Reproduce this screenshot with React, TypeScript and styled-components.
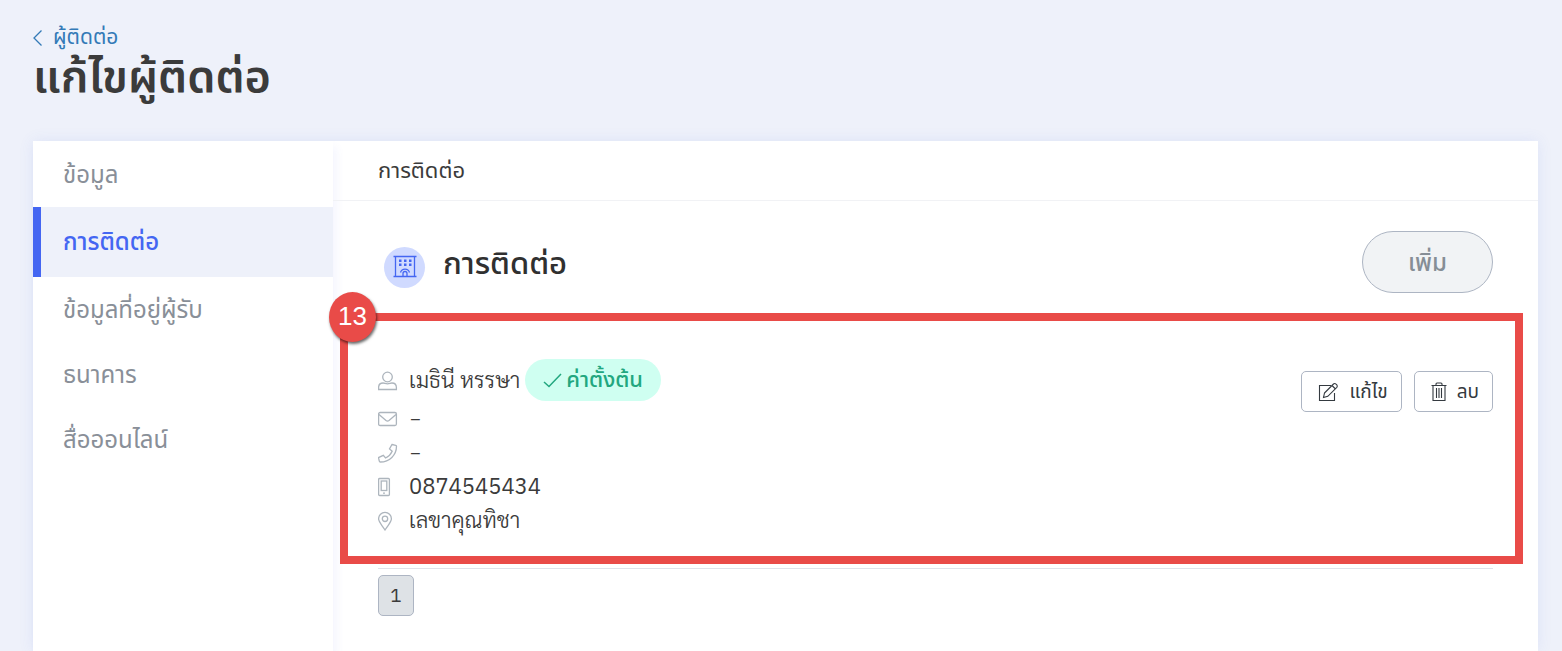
import React from "react";
import styled, { createGlobalStyle } from "styled-components";

const GlobalStyle = createGlobalStyle`
  *, *::before, *::after { box-sizing: border-box; }
  body {
    margin: 0;
    background: #eef1fa;
    color: #3b3b3b;
    font-family: "Noto Sans Thai", "Open Sans", sans-serif;
    font-size: 22px;
  }
  h1, h2, h3, ul, p { margin: 0; padding: 0; }
  ul { list-style: none; }
  button { font-family: inherit; cursor: pointer; }
`;

const Page = styled.div`
  display: flex;
  flex-direction: column;
  min-height: 100vh;
  padding: 21px 24px 0 33px;
`;

const BackLink = styled.a`
  display: flex;
  align-items: center;
  align-self: flex-start;
  gap: 10px;
  height: 32px;
  padding-top: 2px;
  line-height: 30px;
  font-size: 21px;
  color: #337ab7;
  text-decoration: none;
`;

const PageTitle = styled.h1`
  height: 88px;
  line-height: 50px;
  font-size: 45px;
  font-weight: 600;
`;

const Panel = styled.div`
  display: flex;
  flex: 1;
  background: #fff;
  box-shadow: 0 0 14px rgba(78, 105, 230, 0.1);
`;

const SideMenu = styled.nav`
  flex: 0 0 300px;
  padding-top: 1px;
  box-shadow: 4px 6px 8px rgba(78, 105, 230, 0.06);
`;

const MenuItem = styled.a<{ $active?: boolean }>`
  display: flex;
  align-items: center;
  height: ${(p) => (p.$active ? 70 : 65)}px;
  padding-top: 2px;
  padding-left: ${(p) => (p.$active ? 22 : 30)}px;
  border-left: ${(p) => (p.$active ? "8px solid #4466f2" : "0")};
  background: ${(p) => (p.$active ? "#eef1fa" : "transparent")};
  color: ${(p) => (p.$active ? "#4466f2" : "#898f98")};
  font-size: 24px;
  font-weight: ${(p) => (p.$active ? 500 : 400)};
  text-decoration: none;
`;

const Main = styled.main`
  flex: 1;
  min-width: 0;
`;

const MainHeader = styled.h2`
  height: 60px;
  padding: 2px 45px 0;
  border-bottom: 1px solid #f1f2f5;
  line-height: 58px;
  font-size: 22px;
  font-weight: 400;
`;

const Content = styled.div`
  padding: 30px 45px;
`;

const SectionHead = styled.div`
  display: flex;
  align-items: center;
  height: 62px;
  margin-bottom: 20px;
`;

const SectionIcon = styled.span`
  display: flex;
  align-items: center;
  justify-content: center;
  width: 41px;
  height: 41px;
  margin: 10px 18px 0 6px;
  border-radius: 50%;
  background: #d0daff;
  color: #4466f2;
`;

const SectionTitle = styled.h3`
  flex: 1;
  padding-top: 6px;
  line-height: 40px;
  color: #303030;
  font-size: 31px;
  font-weight: 500;
`;

const AddButton = styled.button`
  width: 131px;
  height: 62px;
  padding: 3px 0 0;
  border: 1px solid #adb5c3;
  border-radius: 31px;
  background: #f1f3f5;
  color: #868e96;
  font-size: 24px;
  font-weight: 500;
`;

const ContactCard = styled.article`
  position: relative;
  display: flex;
  justify-content: space-between;
  align-items: flex-start;
  padding: 46px 0 30px;
  border-bottom: 1px solid #e0e2ea;
`;

const Highlight = styled.div`
  position: absolute;
  top: 0;
  right: -30px;
  bottom: 4px;
  left: -38px;
  border: 8px solid #e94b48;
  pointer-events: none;
`;

const StepBadge = styled.span`
  position: absolute;
  top: -21px;
  left: -49px;
  width: 47px;
  height: 50px;
  border-radius: 50%;
  background: #e94b48;
  box-shadow: 1px 2px 3px rgba(0, 0, 0, 0.6);
  color: #fff;
  font: 26px/48px "Liberation Sans", sans-serif;
  text-align: center;
`;

const DetailRow = styled.li<{ $tall?: boolean }>`
  display: flex;
  align-items: center;
  height: ${(p) => (p.$tall ? 43 : 34)}px;
  font-family: "IBM Plex Sans Thai", "Open Sans", sans-serif;
  font-size: 22px;
`;

const DetailIcon = styled.span`
  display: flex;
  width: 31px;
  color: #adb5bd;
`;

const ThaiText = styled.span`
  padding-bottom: 4px;
  font-family: Sarabun, "Noto Sans Thai", sans-serif;
  font-weight: 300;
`;

const EmptyValue = styled.span`
  padding-bottom: 4px;
  font-family: Lato, sans-serif;
`;

const DefaultTag = styled.span`
  display: flex;
  align-items: center;
  align-self: flex-start;
  gap: 4px;
  height: 42px;
  margin-left: 5px;
  padding: 0 18px;
  border-radius: 21px;
  background: #cffff1;
  color: #22a77f;
  font-family: "Noto Sans Thai", sans-serif;
  font-size: 22px;
  font-weight: 500;
`;

const Actions = styled.div`
  display: flex;
  gap: 12px;
  margin-top: 12px;
`;

const SmallButton = styled.button`
  display: flex;
  align-items: center;
  gap: 10px;
  height: 41px;
  padding: 1px 13px 0 16px;
  border: 1px solid #adb5c3;
  border-radius: 5px;
  background: #fff;
  color: #343a40;
  font-size: 19px;
`;

const PageButton = styled.button`
  width: 36px;
  height: 41px;
  margin-top: 6px;
  padding: 2px 0 0;
  border: 1px solid #adb5c3;
  border-radius: 5px;
  background: #dee2e6;
  color: #3b3b3b;
  font-family: "IBM Plex Sans Thai", "Open Sans", sans-serif;
  font-size: 19px;
`;

type IconProps = { w?: number; h?: number; children: React.ReactNode };
const Icon = ({ w = 20, h = 20, children }: IconProps) => (
  <svg width={w} height={h} viewBox={`0 0 ${w} ${h}`} fill="none" stroke="currentColor" strokeWidth="1.3" aria-hidden="true">
    {children}
  </svg>
);

const ChevronIcon = () => (
  <Icon w={10} h={18}><path d="M8.500 1.500 1 9l7.500 7.500" /></Icon>
);
const BuildingIcon = () => (
  <Icon w={24} h={24}>
    <path d="M0.500 1.500h23M0.500 21.500h23M2.500 1.500v20M21.500 1.500v20M10 21.500v-3a2 2 0 0 1 4 0v3M7.500 17.500a4.700 4.700 0 0 1 9 0" />
    <path fill="currentColor" stroke="none" d="M6 4.500h2.500v2.500H6zM11 4.500h2.500v2.500H11zM16 4.500h2.500v2.500H16zM6 8.500h2.500V11H6zM11 8.500h2.500V11H11zM16 8.500h2.500V11H16z" />
  </Icon>
);
const UserIcon = () => (
  <Icon><circle cx="9.500" cy="6" r="4.800" /><path d="M.6 18.500v-2c0-3 2-4.500 4.500-4.500 1.500 0 2.500 .8 4.400 .8s2.900-.8 4.400-.8c2.500 0 4.500 1.500 4.500 4.500v2z" /></Icon>
);
const MailIcon = () => (
  <Icon><rect x=".6" y="3.500" width="17.800" height="13" rx="1.500" /><path d="m1 5.500 7 6c1 .8 2 .8 3 0l7-6" /></Icon>
);
const PhoneIcon = () => (
  <Icon><path d="m14 1.500 3.700.8c.5.100.8.500.8 1C18.500 12 11.500 19 2.300 19c-.5 0-.9-.3-1-.8l-.8-3.600 4.800-2.300 2.300 2.700c3-1.500 5.200-3.700 6.600-6.800l-2.700-2.300z" /></Icon>
);
const MobileIcon = () => (
  <Icon w={14}><rect x=".6" y="1.500" width="10.800" height="17" rx="1" /><rect x="3.200" y="4" width="5.600" height="9.500" /><path d="M5 16.200h2" /></Icon>
);
const PinIcon = () => (
  <Icon w={16}><path d="M7 19C3.500 13.500.6 11 .6 7.800a6.400 6.400 0 0 1 12.800 0C13.400 11 10.500 13.500 7 19z" /><circle cx="7" cy="7.800" r="2.700" /></Icon>
);
const CheckIcon = () => (
  <Icon w={19} h={15}><path strokeWidth="1.500" d="m1 9 5 4.500L18 1" /></Icon>
);
const EditIcon = () => (
  <Icon w={22} h={20}><path strokeWidth="1.100" d="M13 3.500H1.500v15h15V11M6.500 11l9-9c1.500-1.500 5 1.500 3.300 3.300l-9 9-4.300 1.200zM14 3.500 17.500 7" /></Icon>
);
const TrashIcon = () => (
  <Icon w={16} h={20}><path strokeWidth="1.100" d="M.5 3.500h15M5 3.500V2q0-1 1-1h4q1 0 1 1v1.500M2 3.500v15h12v-15M5.500 6v10M8 6v10M10.500 6v10" /></Icon>
);

const menu = ["ข้อมูล", "การติดต่อ", "ข้อมูลที่อยู่ผู้รับ", "ธนาคาร", "สื่อออนไลน์"];

export default function App() {
  return (
    <>
      <GlobalStyle />
      <Page>
        <BackLink href="#contacts"><ChevronIcon />ผู้ติดต่อ</BackLink>
        <PageTitle>แก้ไขผู้ติดต่อ</PageTitle>
        <Panel>
          <SideMenu>
            {menu.map((label, i) => (
              <MenuItem key={label} href={`#section-${i}`} $active={i === 1}>{label}</MenuItem>
            ))}
          </SideMenu>
          <Main>
            <MainHeader>การติดต่อ</MainHeader>
            <Content>
              <SectionHead>
                <SectionIcon><BuildingIcon /></SectionIcon>
                <SectionTitle>การติดต่อ</SectionTitle>
                <AddButton type="button">เพิ่ม</AddButton>
              </SectionHead>
              <ContactCard>
                <ul>
                  <DetailRow $tall>
                    <DetailIcon><UserIcon /></DetailIcon>
                    <ThaiText>เมธินี หรรษา</ThaiText>
                    <DefaultTag><CheckIcon />ค่าตั้งต้น</DefaultTag>
                  </DetailRow>
                  <DetailRow><DetailIcon><MailIcon /></DetailIcon><EmptyValue>–</EmptyValue></DetailRow>
                  <DetailRow><DetailIcon><PhoneIcon /></DetailIcon><EmptyValue>–</EmptyValue></DetailRow>
                  <DetailRow><DetailIcon><MobileIcon /></DetailIcon>0874545434</DetailRow>
                  <DetailRow><DetailIcon><PinIcon /></DetailIcon><ThaiText>เลขาคุณทิชา</ThaiText></DetailRow>
                </ul>
                <Actions>
                  <SmallButton type="button"><EditIcon />แก้ไข</SmallButton>
                  <SmallButton type="button"><TrashIcon />ลบ</SmallButton>
                </Actions>
                <Highlight />
                <StepBadge>13</StepBadge>
              </ContactCard>
              <PageButton type="button">1</PageButton>
            </Content>
          </Main>
        </Panel>
      </Page>
    </>
  );
}
